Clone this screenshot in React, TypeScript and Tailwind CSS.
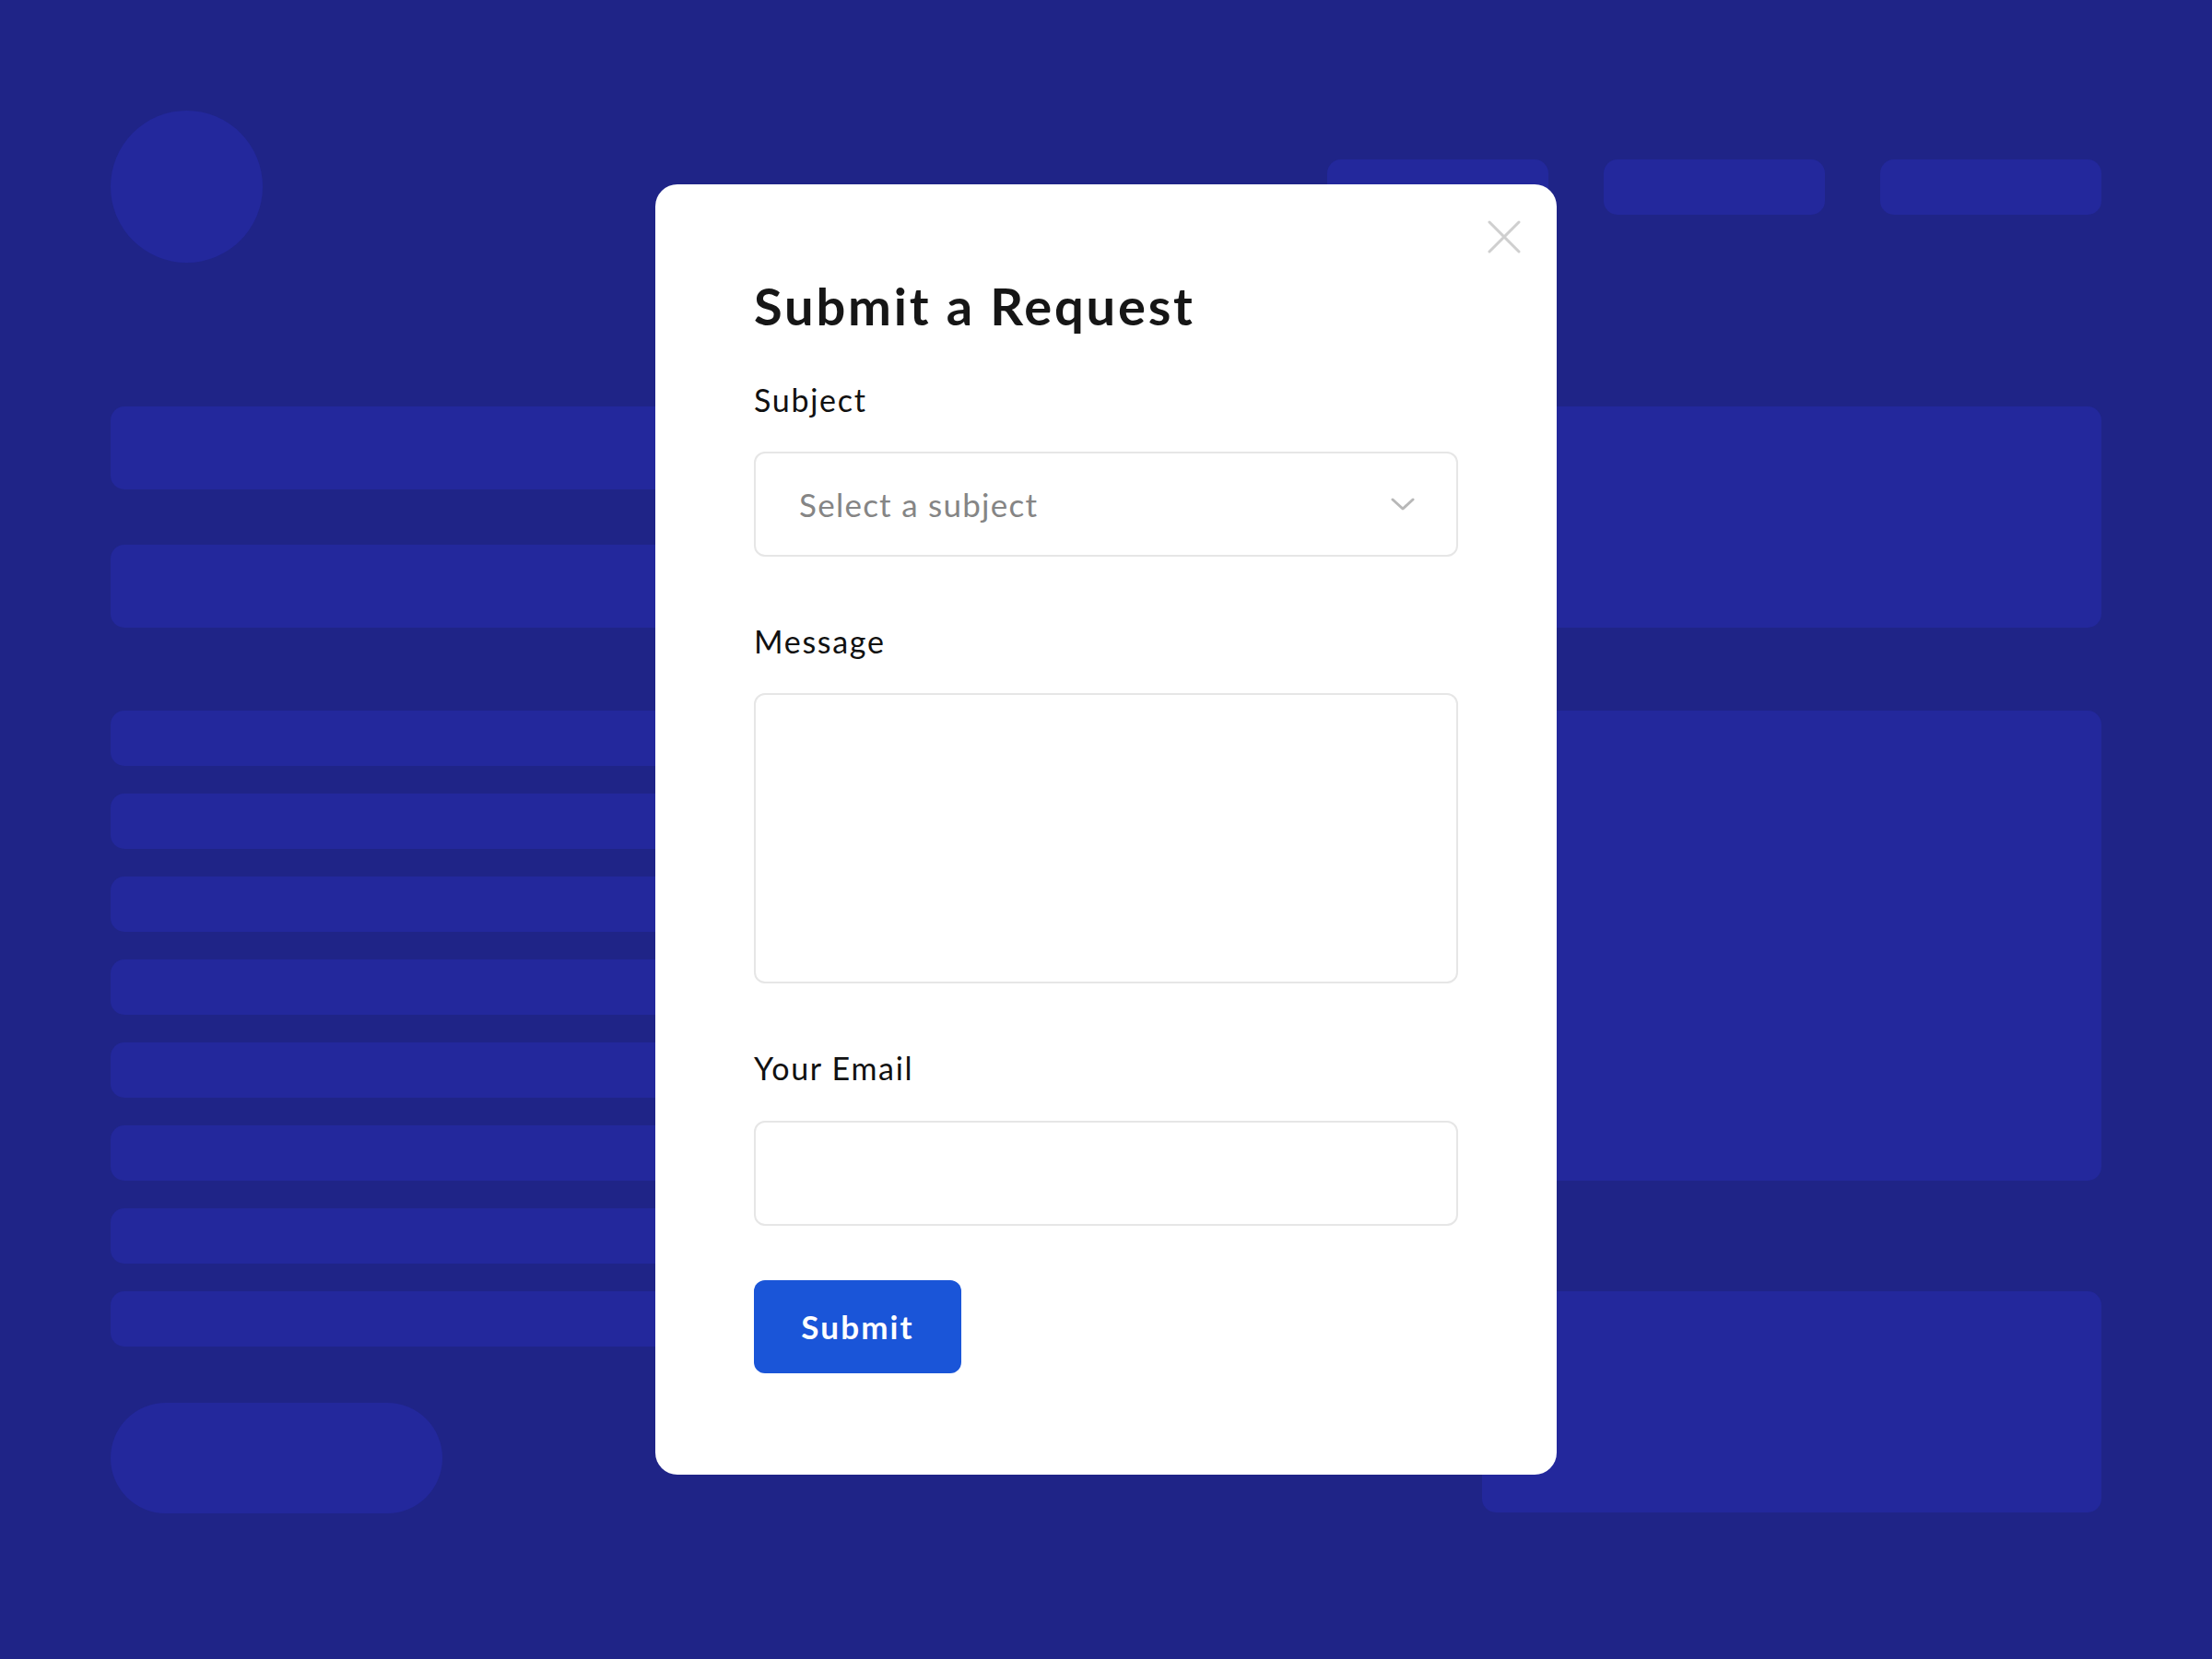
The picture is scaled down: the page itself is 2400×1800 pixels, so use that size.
import { useState } from 'react';

const font = { fontFamily: 'Lato, "Noto Sans", "Liberation Sans", sans-serif' };

function CloseIcon() {
  return (
    <svg width="36" height="36" viewBox="0 0 36 36" fill="none">
      <path d="M2 2L34 34M34 2L2 34" stroke="#cfcfcf" strokeWidth="3" strokeLinecap="round" />
    </svg>
  );
}

function Chevron() {
  return (
    <svg width="26" height="14" viewBox="0 0 26 14" fill="none">
      <path d="M2 2L13 12L24 2" stroke="#b8b8b8" strokeWidth="3" strokeLinecap="round" strokeLinejoin="round" />
    </svg>
  );
}

function Backdrop() {
  const rows = [0, 1, 2, 3, 4, 5, 6, 7];
  return (
    <div className="flex flex-col px-[120px] pt-[120px]">
      <div className="flex h-[165px] items-center justify-between">
        <div className="h-[165px] w-[165px] rounded-full bg-[#23289c]" />
        <div className="flex gap-[60px]">
          <div className="h-[60px] w-[240px] rounded-[15px] bg-[#23289c]" />
          <div className="h-[60px] w-[240px] rounded-[15px] bg-[#23289c]" />
          <div className="h-[60px] w-[240px] rounded-[15px] bg-[#23289c]" />
        </div>
      </div>

      <div className="mt-[156px] grid grid-cols-[1428px_672px] gap-x-[60px]">
        <div className="flex flex-col">
          <div className="h-[90px] rounded-[15px] bg-[#23289c]" />
          <div className="mt-[60px] h-[90px] rounded-[15px] bg-[#23289c]" />
          <div className="mt-[90px] flex flex-col gap-[30px]">
            {rows.map((r) => (
              <div key={r} className="h-[60px] rounded-[15px] bg-[#23289c]" />
            ))}
          </div>
          <div className="mt-[61px] h-[120px] w-[360px] rounded-full bg-[#23289c]" />
        </div>
        <div className="flex flex-col">
          <div className="h-[240px] rounded-[15px] bg-[#23289c]" />
          <div className="mt-[90px] h-[510px] rounded-[15px] bg-[#23289c]" />
          <div className="mt-[120px] h-[240px] rounded-[15px] bg-[#23289c]" />
        </div>
      </div>
    </div>
  );
}

function RequestModal() {
  const [message, setMessage] = useState('');
  const [email, setEmail] = useState('');

  return (
    <div className="relative w-[978px] rounded-[24px] bg-white px-[107px] pt-[104px] pb-[110px]">
      <button className="absolute top-[39px] right-[39px]" aria-label="Close">
        <CloseIcon />
      </button>

      <h2 className="text-[56px] font-bold leading-none tracking-[0.05em] text-[#161616]">Submit a Request</h2>

      <label className="mt-[57px] block text-[34px] leading-none tracking-[0.05em] text-[#111]">Subject</label>
      <div className="mt-[39px] flex h-[114px] items-center justify-between rounded-[12px] border-2 border-[#e6e6e6] pl-[47px] pr-[45px]">
        <span className="text-[35px] tracking-[0.036em] text-[#858585]">Select a subject</span>
        <Chevron />
      </div>

      <label className="mt-[75px] block text-[34px] leading-none tracking-[0.05em] text-[#111]">Message</label>
      <textarea
        value={message}
        onChange={(e) => setMessage(e.target.value)}
        className="mt-[39px] block h-[315px] w-full resize-none rounded-[12px] border-2 border-[#e6e6e6] outline-none"
      />

      <label className="mt-[75px] block text-[34px] leading-none tracking-[0.05em] text-[#111]">Your Email</label>
      <input
        value={email}
        onChange={(e) => setEmail(e.target.value)}
        className="mt-[40px] block h-[114px] w-full rounded-[12px] border-2 border-[#e6e6e6] outline-none"
      />

      <button className="mt-[59px] flex h-[101px] w-[225px] items-center justify-center rounded-[12px] bg-[#1a55d8] text-[35px] font-bold tracking-[0.06em] text-white">
        Submit
      </button>
    </div>
  );
}

export default function App() {
  return (
    <div className="relative h-[1800px] w-[2400px] overflow-hidden bg-[#1f2487]" style={font}>
      <Backdrop />
      <div className="absolute inset-0 flex items-center justify-center">
        <RequestModal />
      </div>
    </div>
  );
}
